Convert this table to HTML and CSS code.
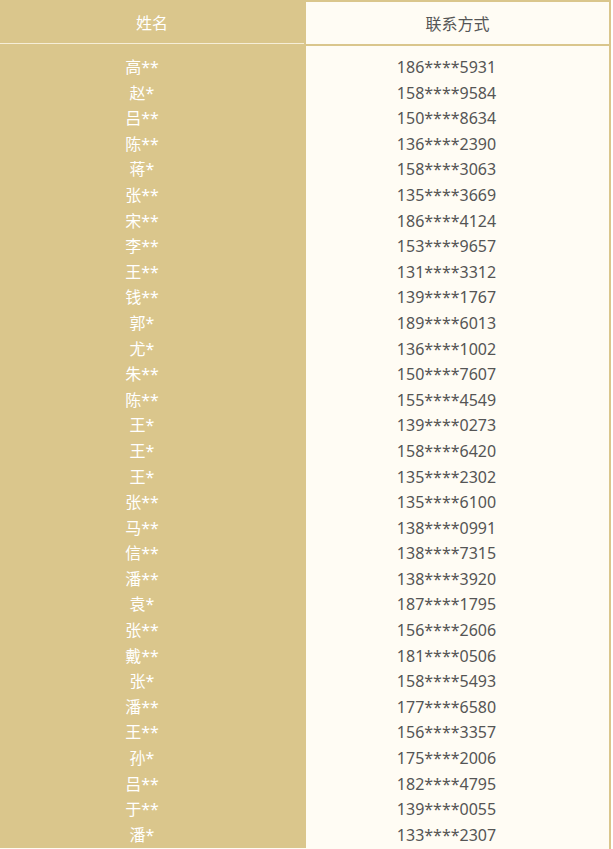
FILE: index.html
```html
<!DOCTYPE html>
<html lang="zh-CN">
<head>
<meta charset="utf-8">
<title>名单</title>
<link rel="stylesheet" href="styles.css">
</head>
<body>
<div class="board">
  <div class="head">
    <div class="hcell name">姓名</div>
    <div class="hcell phone">联系方式</div>
  </div>
  <div class="body">
    <div class="col name">
      <div class="cell">高**</div>
      <div class="cell">赵*</div>
      <div class="cell">吕**</div>
      <div class="cell">陈**</div>
      <div class="cell">蒋*</div>
      <div class="cell">张**</div>
      <div class="cell">宋**</div>
      <div class="cell">李**</div>
      <div class="cell">王**</div>
      <div class="cell">钱**</div>
      <div class="cell">郭*</div>
      <div class="cell">尤*</div>
      <div class="cell">朱**</div>
      <div class="cell">陈**</div>
      <div class="cell">王*</div>
      <div class="cell">王*</div>
      <div class="cell">王*</div>
      <div class="cell">张**</div>
      <div class="cell">马**</div>
      <div class="cell">信**</div>
      <div class="cell">潘**</div>
      <div class="cell">袁*</div>
      <div class="cell">张**</div>
      <div class="cell">戴**</div>
      <div class="cell">张*</div>
      <div class="cell">潘**</div>
      <div class="cell">王**</div>
      <div class="cell">孙*</div>
      <div class="cell">吕**</div>
      <div class="cell">于**</div>
      <div class="cell">潘*</div>
    </div>
    <div class="col phone">
      <div class="cell">186****5931</div>
      <div class="cell">158****9584</div>
      <div class="cell">150****8634</div>
      <div class="cell">136****2390</div>
      <div class="cell">158****3063</div>
      <div class="cell">135****3669</div>
      <div class="cell">186****4124</div>
      <div class="cell">153****9657</div>
      <div class="cell">131****3312</div>
      <div class="cell">139****1767</div>
      <div class="cell">189****6013</div>
      <div class="cell">136****1002</div>
      <div class="cell">150****7607</div>
      <div class="cell">155****4549</div>
      <div class="cell">139****0273</div>
      <div class="cell">158****6420</div>
      <div class="cell">135****2302</div>
      <div class="cell">135****6100</div>
      <div class="cell">138****0991</div>
      <div class="cell">138****7315</div>
      <div class="cell">138****3920</div>
      <div class="cell">187****1795</div>
      <div class="cell">156****2606</div>
      <div class="cell">181****0506</div>
      <div class="cell">158****5493</div>
      <div class="cell">177****6580</div>
      <div class="cell">156****3357</div>
      <div class="cell">175****2006</div>
      <div class="cell">182****4795</div>
      <div class="cell">139****0055</div>
      <div class="cell">133****2307</div>
    </div>
  </div>
</div>
</body>
</html>
```
FILE: styles.css
```css
html, body {
  margin: 0;
  padding: 0;
  background: #ffffff;
}
body {
  font-family: "Noto Sans", "Noto Sans CJK SC", sans-serif;
  font-size: 16px;
}
.board {
  width: 611px;
  height: 849px;
  overflow: hidden;
  background: #fffcf4;
  box-sizing: border-box;
  border-right: 2px solid #dac68c;
}
.head {
  display: grid;
  grid-template-columns: 304px 1fr;
  column-gap: 2px;
  height: 44px;
  background: #dac68c;
  border-bottom: 1px solid #dac68c;
  padding-bottom: 1px;
}
.hcell {
  display: flex;
  align-items: center;
  justify-content: center;
}
.hcell.name {
  color: #ffffff;
  background: #dac68c;
  border-bottom: 1px solid #f6eed8;
}
.hcell.phone {
  color: #555555;
  background: #fffcf4;
  margin-top: 2px;
}
.body {
  display: grid;
  grid-template-columns: 306px 1fr;
}
.col {
  padding-top: 9px;
}
.col.name {
  background: #dac68c;
  color: #ffffff;
}
.col.phone {
  color: #555555;
}
.cell {
  height: 25.6px;
  line-height: 25.6px;
  text-align: center;
  padding-right: 22px;
  white-space: nowrap;
}
```
